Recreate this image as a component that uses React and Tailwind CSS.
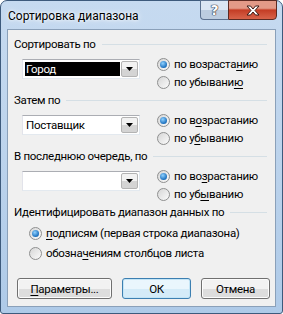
import React from "react";

const font = "font-['Roboto','Noto_Sans',sans-serif]";

// access key underline
const U = ({ children }) => <span className="underline underline-offset-2">{children}</span>;

const Radio = ({ checked }) => (
  <span className="w-[13px] h-[13px] rounded-full border border-[#8e8f8f] bg-gradient-to-br from-[#d6d6d6] to-[#fbfbfb] flex items-center justify-center shrink-0">
    {checked && (
      <span className="w-[7px] h-[7px] rounded-full bg-[radial-gradient(circle_at_40%_35%,#8fd1ff,#1b6fbd_70%,#0d4f8f)]" />
    )}
  </span>
);

const RadioRow = ({ checked, children, h = "h-[18px]" }) => (
  <div className={`flex items-center gap-[4px] ${h}`}>
    <Radio checked={checked} />
    <span className="text-black">{children}</span>
  </div>
);

const Combo = ({ value, selected }) => (
  <div className="w-[118px] h-[20px] bg-white border border-[#abadb3] border-l-[#e2e3ea] border-r-[#e3e9ef] border-b-[#e3e9ef] flex items-stretch">
    <div className="flex-1 p-[2px] pr-[1px] flex">
      <div className={`flex-1 flex items-center pl-[1px] ${selected ? "bg-black text-white" : "text-black"}`}>
        {value}
      </div>
    </div>
    <div className="w-[17px] my-[1px] mr-[1px] border border-[#b3b3b3] rounded-[2px] bg-gradient-to-b from-[#f2f2f2] from-50% to-[#d4d4d4] to-50% flex items-center justify-center">
      <svg width="7" height="4" viewBox="0 0 7 4">
        <path d="M0 0h7L3.5 4z" fill="#000" />
      </svg>
    </div>
  </div>
);

const GroupLabel = ({ children }) => (
  <div className="flex items-center h-[16px] pl-[6px] pr-[8px]">
    <span className="text-black whitespace-nowrap">{children}</span>
    <div className="flex-1 h-px bg-[#d5dfe5] ml-[6px]" />
  </div>
);

const SortSection = ({ label, value, selected, asc, desc }) => (
  <div className="mb-[1px]">
    <GroupLabel>{label}</GroupLabel>
    <div className="flex mt-[3px] h-[36px]">
      <div className="ml-[14px] mt-[4px]">
        <Combo value={value} selected={selected} />
      </div>
      <div className="ml-[17px] flex flex-col">
        <RadioRow checked>{asc}</RadioRow>
        <RadioRow>{desc}</RadioRow>
      </div>
    </div>
  </div>
);

const Button = ({ children, w, def }) => (
  <button
    className={`${w} h-[21px] rounded-[3px] border flex items-center justify-center text-black ${
      def
        ? "border-[#3c7fb1] bg-gradient-to-b from-[#eaf6fd] from-50% to-[#d4ebf8] to-50% shadow-[inset_0_0_0_1px_#c4e5f6]"
        : "border-[#707070] bg-gradient-to-b from-[#f2f2f2] from-50% to-[#dddddd] to-50% shadow-[inset_0_0_0_1px_#fcfcfc]"
    }`}
  >
    {children}
  </button>
);

export default function App() {
  return (
    <div className={`${font} text-[11.5px] leading-[16px] tracking-[-0.3px] w-[283px] h-[314px] bg-white`}>
      <div className="w-[283px] h-[314px] rounded-t-[7px] rounded-b-[3px] border border-[#3d5a7c] bg-gradient-to-b from-[#c6daf0] via-[#bcd3ec] to-[#aecae8] flex flex-col">
        {/* title bar */}
        <div className="h-[28px] flex items-start shrink-0">
          <div className="ml-[7px] mt-[7px] text-[12px] tracking-normal text-black [text-shadow:0_0_6px_#ffffff,0_0_3px_#ffffff]">
            Сортировка диапазона
          </div>
          <div className="ml-auto mr-[5px] flex -mt-px">
            <div className="w-[28px] h-[20px] border border-[#5c7290] border-r-0 rounded-bl-[4px] bg-gradient-to-b from-[#dbe6f3] from-50% to-[#bccde0] to-50% flex items-center justify-center">
              <span className="text-white font-bold text-[14px] leading-none font-['DejaVu_Sans',sans-serif] [text-shadow:0_0_1px_#223,0_0_1px_#223,0_0_1px_#223]">
                ?
              </span>
            </div>
            <div className="w-[49px] h-[20px] border border-[#5c2a22] rounded-br-[4px] bg-gradient-to-b from-[#e39a88] from-40% via-[#c43c24] to-[#d8634a] flex items-center justify-center">
              <svg width="14" height="11" viewBox="0 0 14 11">
                <path
                  d="M1 1h3.5L7 4l2.5-3H13L9 5.5 13 10H9.5L7 7l-2.5 3H1l4-4.5z"
                  fill="#fff"
                  stroke="#3a1a16"
                  strokeWidth="1"
                  strokeLinejoin="round"
                />
              </svg>
            </div>
          </div>
        </div>

        {/* client area */}
        <div className="mx-[6px] h-[278px] border border-[#8aa0b9] bg-[#f0f0f0] flex flex-col pt-[6px]">
          <SortSection
            label="Сортировать по"
            value="Город"
            selected
            asc={<>по возраста<U>н</U>ию</>}
            desc={<>по убывани<U>ю</U></>}
          />
          <SortSection
            label="Затем по"
            value="Поставщик"
            asc={<>по в<U>о</U>зрастанию</>}
            desc={<>по у<U>б</U>ыванию</>}
          />
          <SortSection
            label="В последнюю очередь, по"
            value=""
            asc={<>по во<U>з</U>растанию</>}
            desc={<>по уб<U>ы</U>ванию</>}
          />

          <GroupLabel>Идентифицировать диапазон данных по</GroupLabel>
          <div className="ml-[21px] mt-[3px] flex flex-col">
            <RadioRow checked h="h-[20px]">
              <U>п</U>одписям (первая строка диапазона)
            </RadioRow>
            <RadioRow h="h-[20px]">
              обозна<U>ч</U>ениям столбцов листа
            </RadioRow>
          </div>

          <div className="flex ml-[9px] mt-[15px] gap-[10px]">
            <Button w="w-[95px]">
              <U>П</U>араметры...
            </Button>
            <Button w="w-[69px]" def>
              ОК
            </Button>
            <Button w="w-[69px]">Отмена</Button>
          </div>
        </div>
      </div>
    </div>
  );
}
